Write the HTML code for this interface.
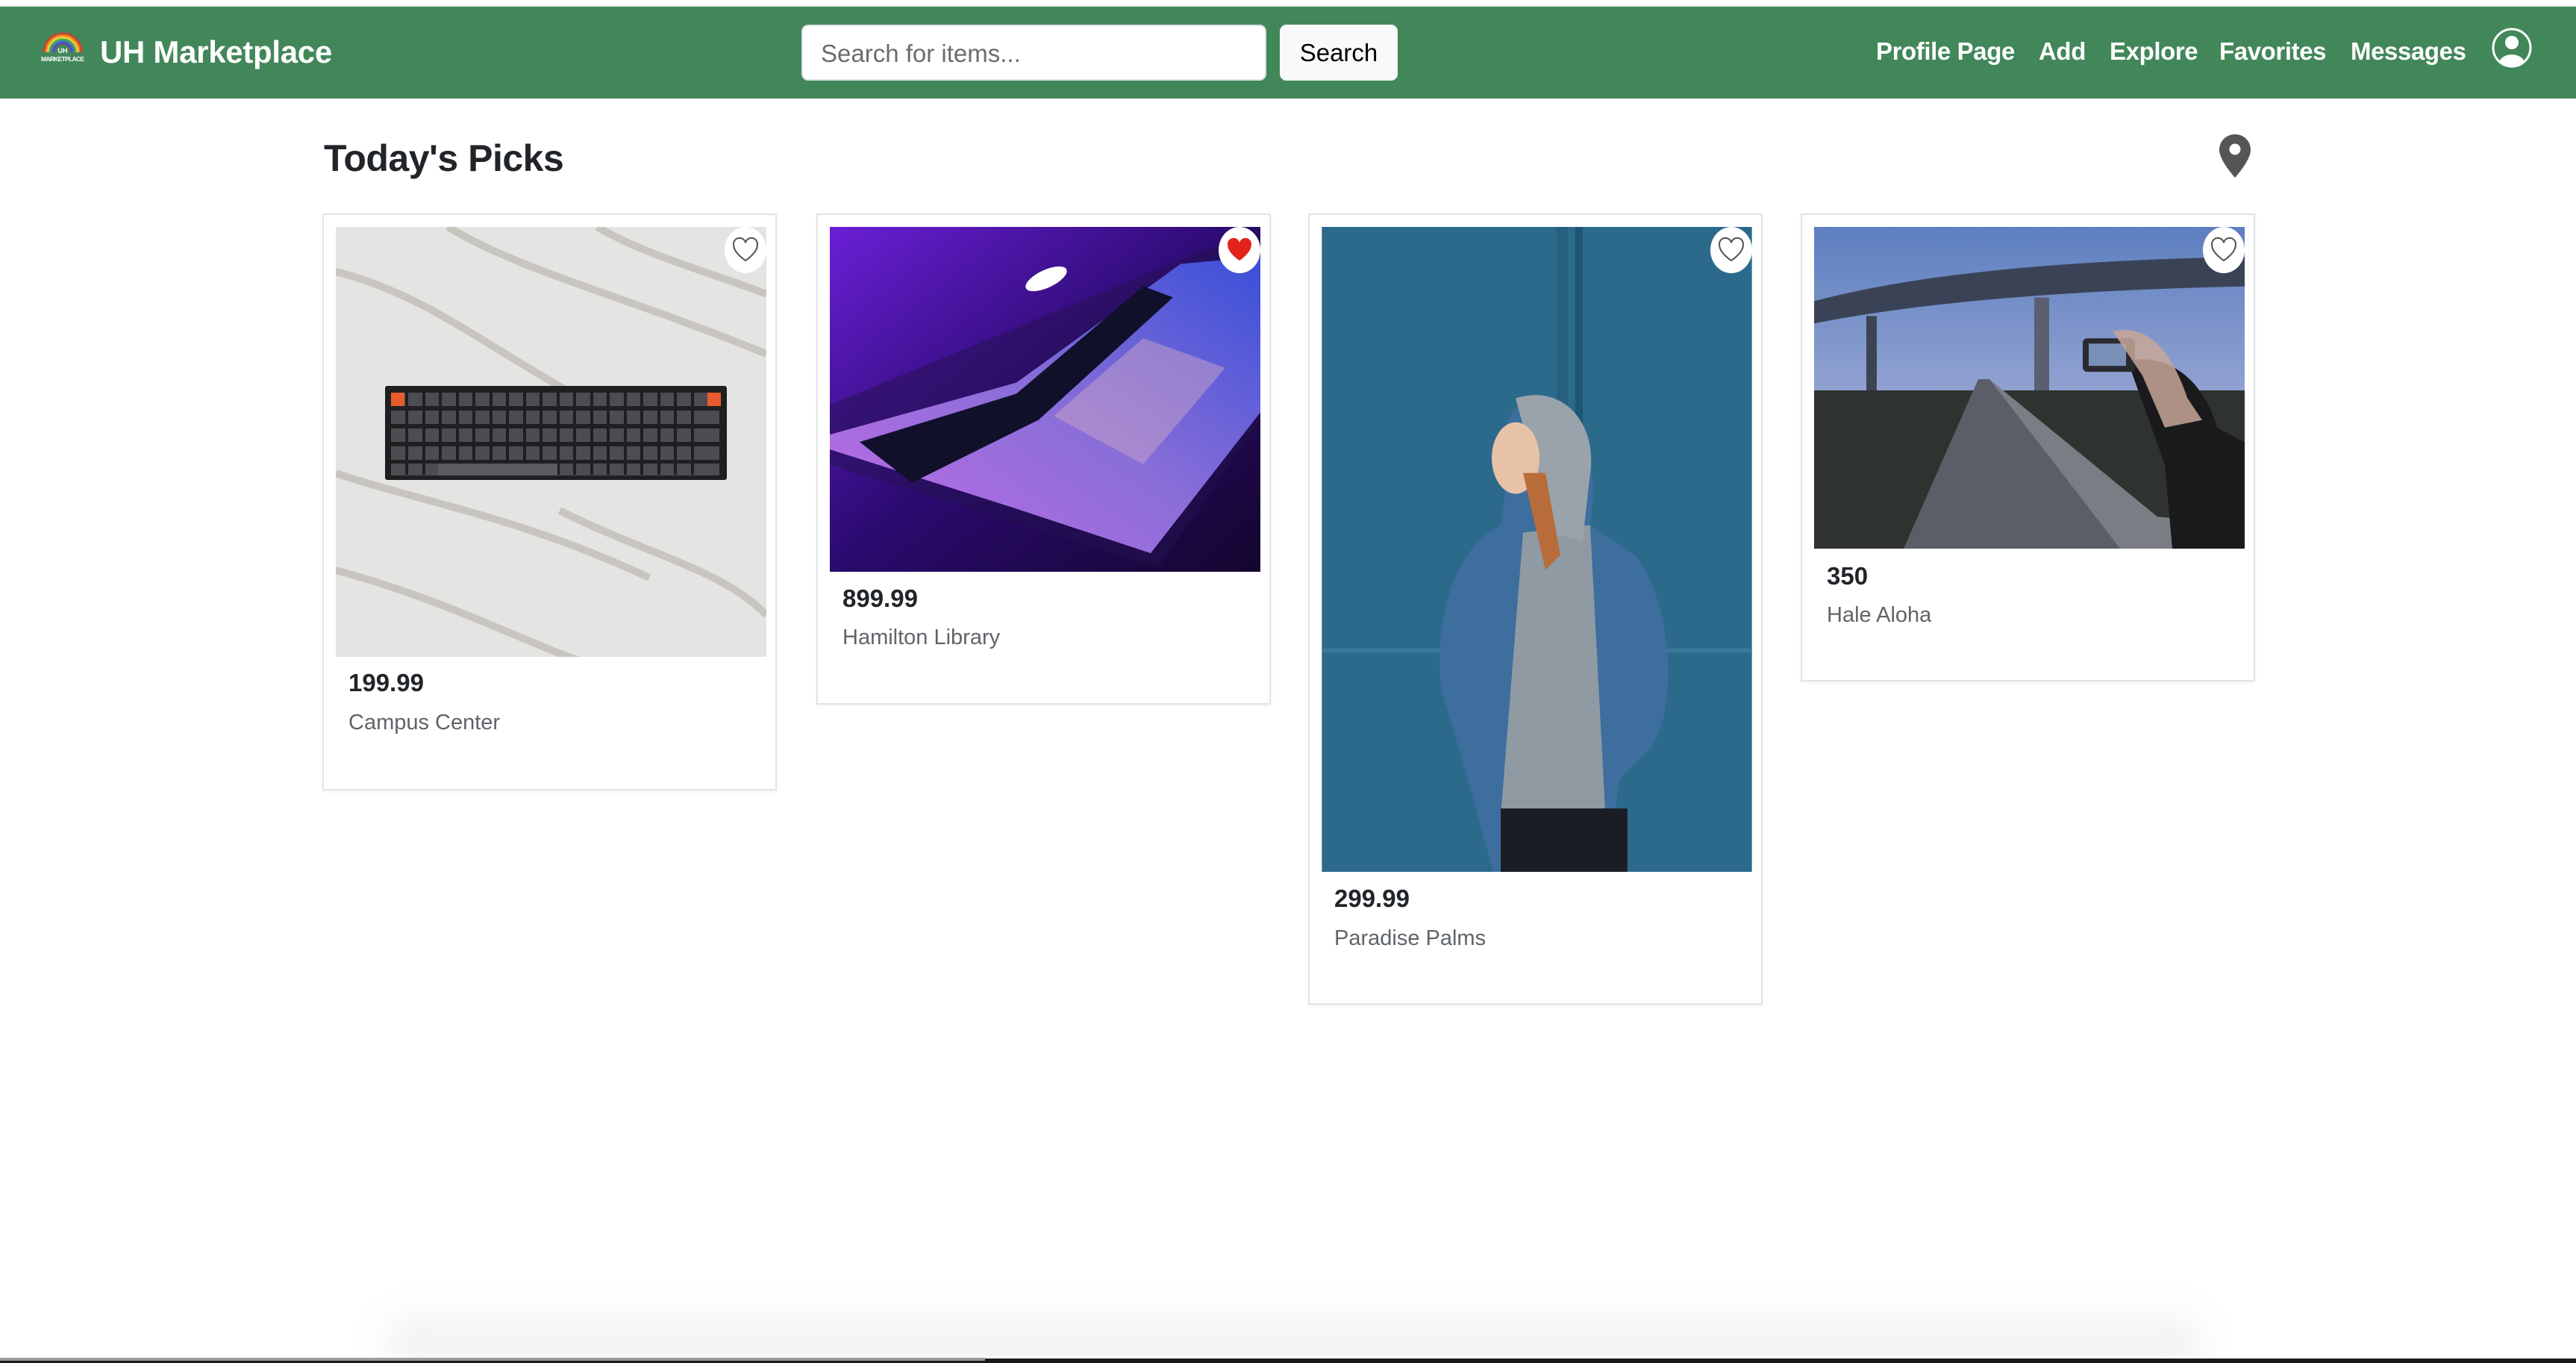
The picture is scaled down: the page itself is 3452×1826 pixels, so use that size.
<!DOCTYPE html>
<html><head><meta charset="utf-8"><style>
*{margin:0;padding:0;box-sizing:border-box}
body{width:3452px;height:1826px;background:#fff;font-family:"Liberation Sans",sans-serif;position:relative;overflow:hidden}
.topline{position:absolute;left:0;top:7px;width:3452px;height:2px;background:#e3e6e8}
nav{position:absolute;left:0;top:9px;width:3452px;height:123px;background:#42875a}
.brand{position:absolute;left:134px;top:37px;color:#fff;font-weight:bold;font-size:42px;letter-spacing:-0.3px}
.search{position:absolute;left:1074px;top:24px;width:623px;height:75px;background:#fff;border:2px solid #dee2e6;border-radius:9px;font-size:33px;color:#6c6c6c;padding:18px 24px}
.btn{position:absolute;left:1715px;top:24px;width:158px;height:75px;background:#f8f9fa;border-radius:9px;font-size:33px;color:#000;text-align:center;line-height:75px}
.nl{position:absolute;top:41px;color:#fff;font-weight:bold;font-size:33px;letter-spacing:-0.4px}
h1{position:absolute;left:434px;top:183px;font-size:50px;font-weight:bold;color:#212529;letter-spacing:-0.5px}
.card{position:absolute;top:286px;width:609px;border:2px solid #e1e4e6;background:#fff;box-shadow:0 2px 4px rgba(0,0,0,0.05)}
.img{position:absolute;left:16px;top:16px;width:577px;overflow:hidden}
.price{position:absolute;left:33px;font-weight:bold;font-size:33px;color:#212529}
.loc{position:absolute;left:33px;font-size:29px;color:#5f6469}
.heart{position:absolute;right:0;top:0;width:56px;height:62px;background:#fff;border-radius:50%}
.heart svg{position:absolute;left:9px;top:12px}
</style></head><body>
<div class="topline"></div>
<nav>
<svg style="position:absolute;left:54px;top:33px" width="60" height="48" viewBox="0 0 60 48">
<g fill="none" stroke-width="2.6">
<path d="M5 28 A25 25 0 0 1 55 28" stroke="#d93a2b"/>
<path d="M7.6 28 A22.4 22.4 0 0 1 52.4 28" stroke="#f08a24"/>
<path d="M10.2 28 A19.8 19.8 0 0 1 49.8 28" stroke="#f3d23a"/>
<path d="M12.8 28 A17.2 17.2 0 0 1 47.2 28" stroke="#4bb04a"/>
<path d="M15.4 28 A14.6 14.6 0 0 1 44.6 28" stroke="#3b6fd0"/>
<path d="M18 28 A12 12 0 0 1 42 28" stroke="#6a3fb0"/>
</g>
<text x="30" y="29" fill="#fff" font-size="9" font-weight="bold" text-anchor="middle" font-family="Liberation Sans">UH</text>
<text x="30" y="40" fill="#fff" font-size="8.5" font-weight="bold" text-anchor="middle" font-family="Liberation Sans" textLength="58">MARKETPLACE</text>
</svg>
<div class="brand">UH Marketplace</div>
<div class="search">Search for items...</div>
<div class="btn">Search</div>
<div class="nl" style="left:2514px">Profile Page</div>
<div class="nl" style="left:2732px">Add</div>
<div class="nl" style="left:2827px">Explore</div>
<div class="nl" style="left:2974px">Favorites</div>
<div class="nl" style="left:3150px">Messages</div>
<svg style="position:absolute;left:3339px;top:28px" width="54" height="54" viewBox="0 0 54 54">
<defs><clipPath id="uc"><circle cx="27" cy="27" r="24"/></clipPath></defs>
<circle cx="27" cy="27" r="25" fill="none" stroke="#fff" stroke-width="3"/>
<g clip-path="url(#uc)" fill="#fff"><circle cx="27" cy="20" r="9"/><ellipse cx="27" cy="50" rx="18" ry="14"/></g>
</svg>
</nav>
<h1>Today's Picks</h1>
<svg style="position:absolute;left:2973px;top:179px" width="44" height="60" viewBox="0 0 44 60">
<path d="M22 1C10 1 1 10 1 22c0 14 21 37 21 37s21-23 21-37C43 10 34 1 22 1z" fill="#555"/>
<circle cx="22" cy="21" r="7.5" fill="#fff"/>
</svg>

<!-- card 1 -->
<div class="card" style="left:432px;height:773px">
<div class="img" style="height:576px">
<svg width="577" height="576" viewBox="0 0 577 576">
<rect width="577" height="576" fill="#e4e4e2"/>
<g stroke="#bdb8b0" stroke-width="10" fill="none" opacity="0.7">
<path d="M0 60 C120 90 200 160 330 230"/><path d="M150 0 C250 60 380 90 577 170"/>
<path d="M0 330 C120 370 250 390 420 470"/><path d="M0 460 C150 500 260 560 330 582"/>
<path d="M300 380 C420 440 520 460 577 520"/><path d="M350 0 C420 40 500 60 577 90"/>
</g>
<rect x="66" y="213" width="458" height="126" fill="#1e1f21" rx="3"/>
<g fill="#4b4d50">
<rect x="74" y="222" width="440" height="18"/><rect x="74" y="246" width="440" height="18"/>
<rect x="74" y="270" width="440" height="18"/><rect x="74" y="294" width="440" height="18"/>
<rect x="74" y="317" width="440" height="16"/>
</g>
<g stroke="#1e1f21" stroke-width="4">
<path d="M95 222v110M118 222v110M140 222v110M163 222v110M185 222v110M208 222v110M230 222v110M253 222v110M275 222v110M298 222v110M320 222v110M343 222v110M365 222v110M388 222v110M410 222v110M433 222v110M455 222v110M478 222v110"/>
</g>
<rect x="137" y="317" width="160" height="16" fill="#5a5c5f"/>
<rect x="74" y="222" width="18" height="18" fill="#e85c2e"/><rect x="498" y="222" width="18" height="18" fill="#e85c2e"/>
</svg>
<div class="heart"><svg width="38" height="36" viewBox="0 0 24 22"><path d="M12 20.5S2 14 2 7.5A5 5 0 0 1 12 5.5a5 5 0 0 1 10 2C22 14 12 20.5 12 20.5z" fill="none" stroke="#555" stroke-width="1.3"/></svg></div>
</div>
<div class="price" style="top:608px">199.99</div>
<div class="loc" style="top:664px">Campus Center</div>
</div>

<!-- card 2 -->
<div class="card" style="left:1094px;height:658px">
<div class="img" style="height:462px">
<svg width="577" height="462" viewBox="0 0 577 465" preserveAspectRatio="none">
<defs>
<linearGradient id="lg1" x1="0" y1="0" x2="1" y2="1"><stop offset="0" stop-color="#6a1fd6"/><stop offset="0.5" stop-color="#2a0a6e"/><stop offset="1" stop-color="#14062e"/></linearGradient>
<linearGradient id="lg2" x1="0" y1="1" x2="1" y2="0"><stop offset="0" stop-color="#c36be8"/><stop offset="0.5" stop-color="#8a6ed8"/><stop offset="1" stop-color="#3950d8"/></linearGradient>
</defs>
<rect width="577" height="465" fill="url(#lg1)"/>
<path d="M0 240 L577 0 L577 260 L440 460 L0 320 Z" fill="#23124f" opacity="0.5"/>
<path d="M0 280 L250 210 L470 50 L577 40 L577 250 L430 440 L250 380 L0 300Z" fill="url(#lg2)"/>
<path d="M40 290 L250 225 L420 80 L460 95 L280 260 L110 345Z" fill="#10102a"/>
<path d="M300 255 L420 150 L530 190 L420 320Z" fill="#c9a4c8" opacity="0.5"/>
<ellipse cx="290" cy="70" rx="30" ry="12" fill="#fff" transform="rotate(-25 290 70)"/>
</svg>
<div class="heart"><svg width="38" height="36" viewBox="0 0 24 22"><path d="M12 20.5S2 14 2 7.5A5 5 0 0 1 12 5.5a5 5 0 0 1 10 2C22 14 12 20.5 12 20.5z" fill="#e4221c"/></svg></div>
</div>
<div class="price" style="top:495px">899.99</div>
<div class="loc" style="top:550px">Hamilton Library</div>
</div>

<!-- card 3 -->
<div class="card" style="left:1753px;height:1060px">
<div class="img" style="height:864px">
<svg width="577" height="864" viewBox="0 0 577 865">
<rect width="577" height="865" fill="#2c6a8c"/>
<rect x="315" y="0" width="15" height="520" fill="#25607f"/><rect x="340" y="0" width="10" height="520" fill="#1e5572"/>
<rect x="0" y="565" width="577" height="6" fill="#3a7898"/>
<path d="M290 230 C250 230 235 280 250 330 L240 400 C180 430 150 520 160 620 L190 720 L230 865 L380 865 L400 740 L440 700 C480 650 470 500 420 440 L360 400 C370 330 360 240 310 230Z" fill="#3d6e9e"/>
<path d="M270 410 L360 400 L380 780 L240 790 Z" fill="#8f9aa3"/>
<path d="M260 230 C320 210 370 260 360 330 L350 420 L300 410 L290 340 Z" fill="#9aa3ab"/>
<ellipse cx="260" cy="310" rx="32" ry="48" fill="#e8c2a7"/>
<path d="M270 330 L300 460 L320 440 L300 330Z" fill="#b86c3a"/>
<rect x="240" y="780" width="170" height="85" fill="#1b1d24"/>
</svg>
<div class="heart"><svg width="38" height="36" viewBox="0 0 24 22"><path d="M12 20.5S2 14 2 7.5A5 5 0 0 1 12 5.5a5 5 0 0 1 10 2C22 14 12 20.5 12 20.5z" fill="none" stroke="#555" stroke-width="1.3"/></svg></div>
</div>
<div class="price" style="top:897px">299.99</div>
<div class="loc" style="top:953px">Paradise Palms</div>
</div>

<!-- card 4 -->
<div class="card" style="left:2413px;height:627px">
<div class="img" style="height:431px">
<svg width="577" height="431" viewBox="0 0 577 433" preserveAspectRatio="none">
<defs><linearGradient id="sky" x1="0" y1="0" x2="0" y2="1"><stop offset="0" stop-color="#5d7fc0"/><stop offset="0.6" stop-color="#9aa8d4"/><stop offset="1" stop-color="#c9a4b6"/></linearGradient></defs>
<rect width="577" height="433" fill="url(#sky)"/>
<path d="M0 100 C150 60 350 45 577 40 L577 80 C350 85 150 100 0 130Z" fill="#3a4356"/>
<rect x="70" y="120" width="14" height="140" fill="#3c4454"/><rect x="295" y="95" width="20" height="270" fill="#5a6070"/>
<rect x="0" y="220" width="577" height="213" fill="#2f3330"/>
<path d="M120 433 L220 205 L235 205 L410 433Z" fill="#5a5e66"/>
<path d="M235 205 L460 390 L577 400 L577 433 L410 433Z" fill="#7a7e84"/>
<path d="M420 180 C470 170 520 200 540 270 L577 290 L577 433 L480 433 L470 320 Z" fill="#1a1a1c"/>
<rect x="360" y="150" width="70" height="45" rx="6" fill="#2a2b30"/><rect x="368" y="157" width="50" height="30" fill="#7a90b8"/>
<path d="M400 140 C450 130 480 170 500 230 L520 260 L470 270 L440 200Z" fill="#c8a798" opacity="0.85"/>
</svg>
<div class="heart"><svg width="38" height="36" viewBox="0 0 24 22"><path d="M12 20.5S2 14 2 7.5A5 5 0 0 1 12 5.5a5 5 0 0 1 10 2C22 14 12 20.5 12 20.5z" fill="none" stroke="#555" stroke-width="1.3"/></svg></div>
</div>
<div class="price" style="top:465px">350</div>
<div class="loc" style="top:520px">Hale Aloha</div>
</div>

<div style="position:absolute;left:520px;top:1745px;width:2430px;height:75px;background:linear-gradient(#fff,#ebebeb);filter:blur(20px)"></div>
<div style="position:absolute;left:0;top:1820px;width:3452px;height:6px;background:#1a1a1a"></div>
<div style="position:absolute;left:0;top:1819px;width:1320px;height:4px;background:#9a9a9a"></div>
</body></html>
